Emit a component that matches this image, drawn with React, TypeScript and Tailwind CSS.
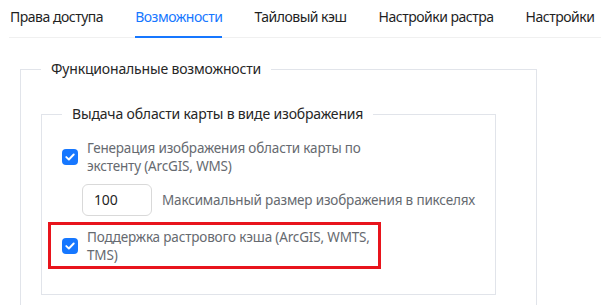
import React from "react";

function Check() {
  return (
    <span className="flex h-4 w-4 shrink-0 items-center justify-center rounded-[4px] bg-[#1677ff]">
      <svg width="10" height="8" viewBox="0 0 10 8" fill="none">
        <path d="M1.3 4.1 L3.9 6.5 L8.7 1.5" stroke="white" strokeWidth="1.9" strokeLinecap="round" strokeLinejoin="round" />
      </svg>
    </span>
  );
}

export default function App() {
  const tabs = ["Права доступа", "Возможности", "Тайловый кэш", "Настройки растра", "Настройки"];
  return (
    <div className="h-[305px] w-[601px] overflow-hidden bg-white text-[14px] leading-5 tracking-[-0.012em]" style={{ fontFamily: '"Noto Sans", "Segoe UI", sans-serif' }}>
      <div className="ml-[9px] flex gap-8 whitespace-nowrap border-b border-[#f0f0f0] pl-[1px] tracking-[-0.035em]">
        {tabs.map((t, i) => (
          <div key={t} className={`relative pt-[7px] pb-[10px] ${i === 1 ? "text-[#1677ff]" : "text-[#1f1f1f]"}`}>
            {t}
            {i === 1 && <div className="absolute bottom-[-1px] left-0 right-0 h-[2px] bg-[#1677ff]" />}
          </div>
        ))}
      </div>
      <fieldset className="ml-[20px] mt-[21px] w-[517px] border border-[#e1e4ea] px-5 pb-10 pt-[25px]">
        <legend className="px-[10px] text-[#262626]">Функциональные возможности</legend>
        <fieldset className="w-[455px] border border-[#e1e4ea] px-5 pb-[25px] pt-[15px]">
          <legend className="px-[10px] text-[#262626]">Выдача области карты в виде изображения</legend>
          <div className="flex items-center gap-[9px] text-[13.5px] leading-[18px] text-[#666a70]">
            <Check />
            <div className="whitespace-nowrap">
              Генерация изображения области карты по
              <br />
              экстенту (ArcGIS, WMS)
            </div>
          </div>
          <div className="mt-[9px] flex items-center gap-[10px] pl-[20px] text-[13.5px] text-[#666a70]">
            <div className="flex h-[32px] w-[70px] items-center rounded-[6px] border border-[#d9d9d9] pl-[11px] text-[14px] text-[#1f1f1f]">100</div>
            <div className="whitespace-nowrap">Максимальный размер изображения в пикселях</div>
          </div>
          <div className="-ml-[14px] mt-[6px] w-[333px] border-[3px] border-[#e8141c] pb-[2px] pl-[11px] pt-[3px]">
            <div className="flex items-center gap-[9px] text-[13.5px] leading-[18px] text-[#666a70]">
              <Check />
              <div className="whitespace-nowrap">
                Поддержка растрового кэша (ArcGIS, WMTS,
                <br />
                TMS)
              </div>
            </div>
          </div>
        </fieldset>
      </fieldset>
    </div>
  );
}
